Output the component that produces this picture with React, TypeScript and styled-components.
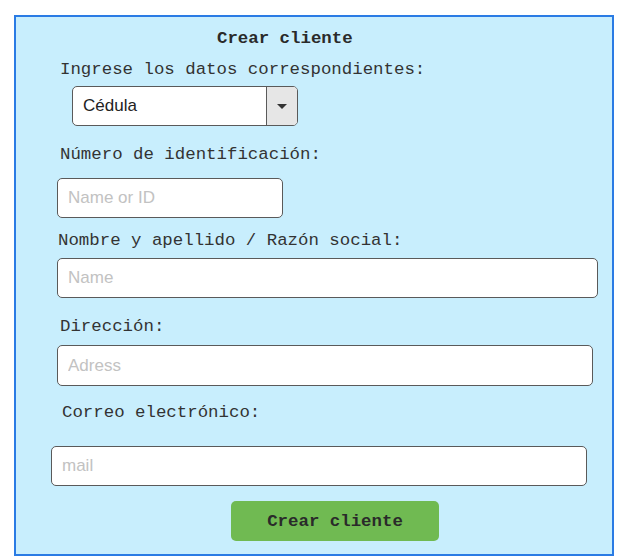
import React from "react";
import styled, { createGlobalStyle } from "styled-components";

const Global = createGlobalStyle`
  html, body { margin: 0; padding: 0; background: #ffffff; }
  * { box-sizing: border-box; }
`;

const Page = styled.div`
  padding: 15px 0 0 14px;
`;

const Panel = styled.form`
  width: 600px;
  height: 541px;
  border: 2px solid #2a7be4;
  background: #c8eefd;
  display: flex;
  flex-direction: column;
  align-items: flex-start;
  padding-top: 12px;
`;

const mono = `"Liberation Mono", "Courier New", monospace`;
const sans = `"Liberation Sans", Arial, sans-serif`;

const Title = styled.h2`
  margin: 0 0 0 201px;
  font-family: ${mono};
  font-size: 17.4px;
  line-height: 20px;
  font-weight: bold;
  color: #2a2a2a;
`;

const Label = styled.label<{ $x: number; $mt: number }>`
  display: block;
  margin: ${(p) => p.$mt}px 0 0 ${(p) => p.$x}px;
  font-family: ${mono};
  font-size: 17.4px;
  line-height: 20px;
  color: #333;
  white-space: nowrap;
`;

const SelectBox = styled.div`
  margin: 6px 0 0 56px;
  width: 226px;
  height: 40px;
  display: flex;
  border: 1.5px solid #5a5a5a;
  border-radius: 5px;
  background: #ffffff;
  overflow: hidden;
`;

const SelectValue = styled.div`
  flex: 1;
  display: flex;
  align-items: center;
  padding-left: 10px;
  font-family: ${sans};
  font-size: 17px;
  color: #222;
`;

const ArrowBox = styled.div`
  width: 31px;
  border-left: 1.5px solid #5a5a5a;
  background: #e6e6e6;
  display: flex;
  align-items: center;
  justify-content: center;
`;

const Arrow = styled.span`
  width: 0;
  height: 0;
  border-left: 5px solid transparent;
  border-right: 5px solid transparent;
  border-top: 5px solid #333;
`;

const Input = styled.input<{ $x: number; $mt: number; $w: number; $h?: number }>`
  display: block;
  margin: ${(p) => p.$mt}px 0 0 ${(p) => p.$x}px;
  width: ${(p) => p.$w}px;
  height: ${(p) => p.$h ?? 40}px;
  border: 1.5px solid #5a5a5a;
  border-radius: 5px;
  background: #ffffff;
  padding: 0 10px;
  font-family: ${sans};
  font-size: 17px;
  color: #222;
  outline: none;
  &::placeholder {
    color: #c2c2c2;
  }
`;

const Button = styled.button`
  margin: 15px 0 0 215px;
  width: 208px;
  height: 40px;
  border: none;
  border-radius: 5px;
  background: #70ba52;
  font-family: ${mono};
  font-size: 17.4px;
  font-weight: bold;
  color: #2a2a2a;
  cursor: pointer;
`;

export default function App() {
  return (
    <>
      <Global />
      <Page>
        <Panel onSubmit={(e) => e.preventDefault()}>
          <Title>Crear cliente</Title>
          <Label $x={44} $mt={11}>Ingrese los datos correspondientes:</Label>
          <SelectBox>
            <SelectValue>Cédula</SelectValue>
            <ArrowBox>
              <Arrow />
            </ArrowBox>
          </SelectBox>
          <Label $x={44} $mt={19}>Número de identificación:</Label>
          <Input $x={41} $mt={13} $w={226} placeholder="Name or ID" />
          <Label $x={42} $mt={13}>Nombre y apellido / Razón social:</Label>
          <Input $x={41} $mt={7} $w={541} placeholder="Name" />
          <Label $x={44} $mt={19}>Dirección:</Label>
          <Input $x={41} $mt={8} $w={536} $h={41} placeholder="Adress" />
          <Label $x={46} $mt={17}>Correo electrónico:</Label>
          <Input $x={35} $mt={23} $w={536} placeholder="mail" />
          <Button type="submit">Crear cliente</Button>
        </Panel>
      </Page>
    </>
  );
}
